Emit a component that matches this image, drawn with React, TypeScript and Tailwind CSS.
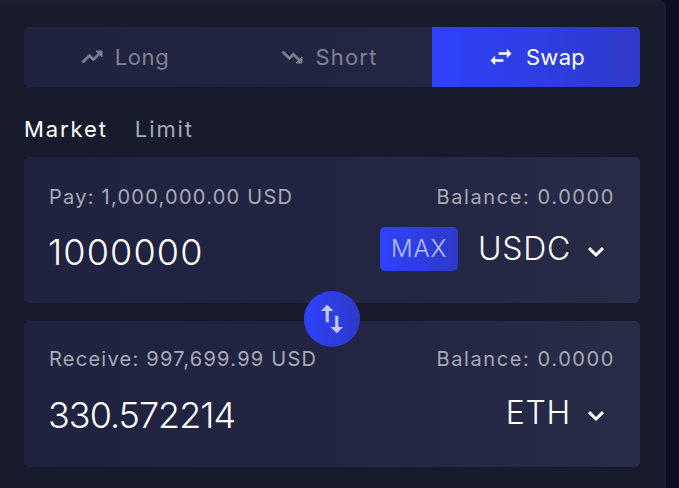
import React from "react";

function TrendUp({ className }: { className?: string }) {
  return (
    <svg viewBox="0 0 24 24" className={className} fill="currentColor" stroke="currentColor" strokeWidth="1">
      <path d="M16 6l2.29 2.29-4.88 4.88-4-4L2 16.59 3.41 18l6-6 4 4 6.3-6.29L22 12V6z" />
    </svg>
  );
}
function TrendDown({ className }: { className?: string }) {
  return (
    <svg viewBox="0 0 24 24" className={className} fill="currentColor" stroke="currentColor" strokeWidth="1">
      <path d="M16 18l2.29-2.29-4.88-4.88-4 4L2 7.41 3.41 6l6 6 4-4 6.3 6.29L22 12v6z" />
    </svg>
  );
}
function SwapH({ className }: { className?: string }) {
  return (
    <svg viewBox="0 0 24 24" className={className} fill="currentColor">
      <path d="M6.99 11L3 15l3.99 4v-3H14v-2H6.99v-3zM21 9l-3.99-4v3H10v2h7.01v3L21 9z" />
    </svg>
  );
}
function SwapV({ className }: { className?: string }) {
  return (
    <svg viewBox="0 0 24 24" className={className} fill="currentColor">
      <path d="M16 17.01V10h-2v7.01h-3L15 21l4-3.99h-3zM9 3L5 6.99h3V14h2V6.99h3L9 3z" />
    </svg>
  );
}
function Chevron() {
  return (
    <svg viewBox="0 0 18 18" className="w-[18px] h-[18px] text-white" fill="none" stroke="currentColor" strokeWidth="3">
      <path d="M2 5.2 L9 12 L16 5.2" />
    </svg>
  );
}

function Card({
  label,
  value,
  token,
  max,
  second,
}: {
  label: string;
  value: string;
  token: string;
  max?: boolean;
  second?: boolean;
}) {
  return (
    <div
      className={
        "h-[146px] rounded-[5px] bg-gradient-to-r from-[#1f2340] via-[#222542] to-[#282c47] pl-[25px] pr-[26px] flex flex-col " +
        (second ? "pt-[24px]" : "pt-[26px]")
      }
    >
      <div className="flex justify-between items-center h-[29px] text-[20px] leading-[29px] text-[#a8aab6]">
        <span className="tracking-[1.25px]">{label}</span>
        <span className="tracking-[1.6px] mr-[-1px]">Balance: 0.0000</span>
      </div>
      <div className={"flex justify-between items-center h-[44px] " + (second ? "mt-[17px]" : "mt-[15px]")}>
        <span
          className={
            "-ml-px text-[36px] leading-[44px] font-light text-white " +
            (second ? "pt-[3px] tracking-[-1px]" : "pt-[5px] tracking-[1.15px]")
          }
        >
          {value}
        </span>
        <div className="flex items-center">
          {max && (
            <span className="w-[78px] h-[44px] mr-[20px] rounded-[5px] bg-gradient-to-r from-[#2d42fc] to-[#2e3ac8] flex items-center justify-center text-[24px] font-light tracking-[0.8px] text-[#b9c0f8]">
              MAX
            </span>
          )}
          <span className="text-[32px] leading-[44px] font-light tracking-[0.7px] text-white">{token}</span>
          <span className="ml-[16px] mr-[9px] mt-[5px]">
            <Chevron />
          </span>
        </div>
      </div>
    </div>
  );
}

export default function App() {
  return (
    <div className="w-[679px] h-[488px] overflow-hidden bg-[#0d0e24]" style={{ fontFamily: "Inter, 'Noto Sans', sans-serif" }}>
      <div className="w-[666px] h-[488px] bg-[#181b2c] rounded-tr-[8px] border-t-2 border-r-2 border-[#1d2032] pl-[24px] pr-[24px] pt-[25px]">
        <div className="flex h-[60px] w-[616px] rounded-[5px] overflow-hidden bg-gradient-to-r from-[#1f2340] via-[#222542] to-[#282c47]">
          <div className="w-[204px] flex items-center justify-center gap-[11px] pr-[3px] text-[#80828f] text-[22px] tracking-[0.6px]">
            <TrendUp className="w-[24px] h-[24px]" />
            <span>Long</span>
          </div>
          <div className="w-[204px] flex items-center justify-center gap-[11px] pr-[2px] text-[#80828f] text-[22px] tracking-[1.2px]">
            <TrendDown className="w-[24px] h-[24px]" />
            <span>Short</span>
          </div>
          <div className="w-[208px] flex items-center justify-center gap-[11px] bg-gradient-to-r from-[#2d42fc] to-[#2e3ac8] text-white text-[22px] tracking-[0.3px]">
            <SwapH className="w-[28px] h-[28px]" />
            <span>Swap</span>
          </div>
        </div>
        <div className="flex gap-[27px] mt-[26px] h-[32px] items-center text-[22px] tracking-[1.9px]">
          <span className="text-white">Market</span>
          <span className="text-[#a8aab6]">Limit</span>
        </div>
        <div className="relative mt-[12px] w-[616px] flex flex-col gap-[18px]">
          <Card label="Pay: 1,000,000.00 USD" value="1000000" token="USDC" max />
          <Card label="Receive: 997,699.99 USD" value="330.572214" token="ETH" second />
          <div className="absolute left-[280px] top-[134px] w-[56px] h-[56px] rounded-full bg-gradient-to-r from-[#2d42fc] to-[#2e3ac8] flex items-center justify-center text-[#c2c8fb]">
            <SwapV className="w-[38px] h-[38px]" />
          </div>
        </div>
      </div>
    </div>
  );
}
